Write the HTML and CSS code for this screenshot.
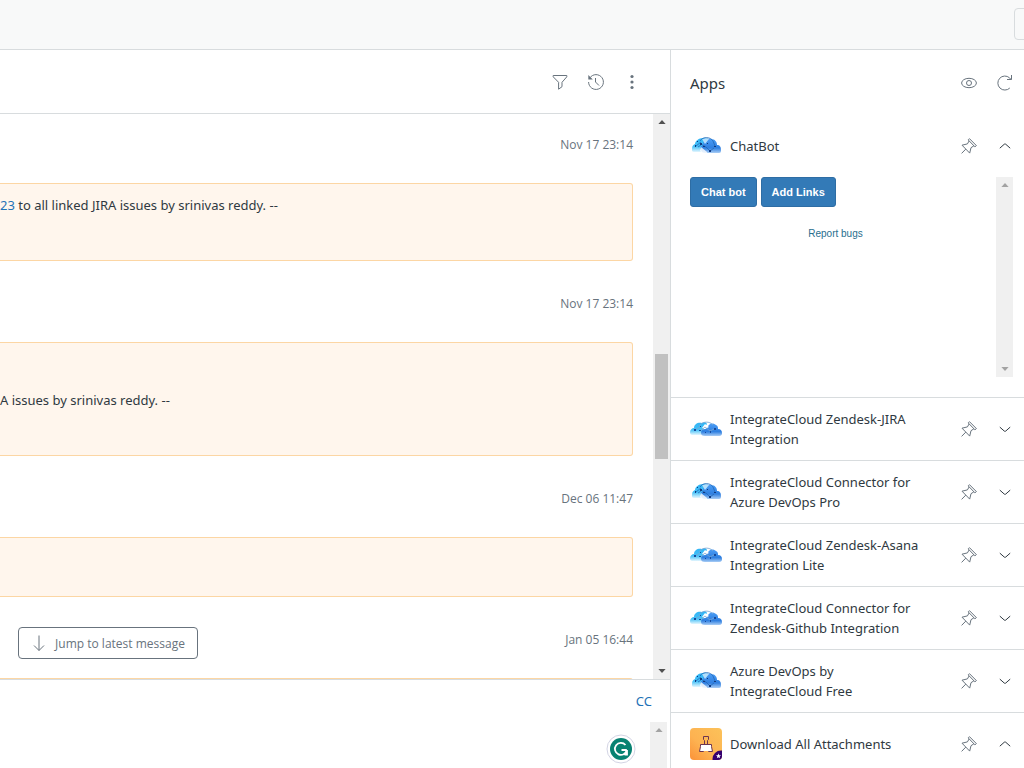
FILE: index.html
```html
<!DOCTYPE html>
<html lang="en">
<head>
	<meta charset="utf-8">
	<title>Ticket</title>
	<link rel="stylesheet" href="styles.css">
</head>
<body>
	<svg class="sprite" aria-hidden="true">
		<defs>
			<linearGradient id="cloudLight" x1="0" y1="0" x2="0" y2="1">
				<stop offset="0" stop-color="#2fb4f5"/>
				<stop offset=".6" stop-color="#45c0f7"/>
				<stop offset="1" stop-color="#e4f6fe"/>
			</linearGradient>
			<linearGradient id="cloudDark" x1="0" y1="0" x2="0" y2="1">
				<stop offset="0" stop-color="#4a9cf5"/>
				<stop offset=".65" stop-color="#2f7fe0"/>
				<stop offset="1" stop-color="#a9cdf5"/>
			</linearGradient>
			<linearGradient id="clipBg" x1="1" y1="0" x2="0" y2="1">
				<stop offset="0" stop-color="#fcc25a"/>
				<stop offset=".6" stop-color="#fdb251"/>
				<stop offset="1" stop-color="#fb9238"/>
			</linearGradient>
		</defs>
		<symbol id="cloud" viewBox="0 0 32 32">
			<path fill="url(#cloudLight)" d="M0 19c0-2 2-4 4-4 0-4 4-6 8-5 2-1 4-1 5 1l-3 4-3 7H2c-1 0-2-1-2-3z"/>
			<path fill="url(#cloudDark)" d="M11 20c0-3 2-4 4-4l5-5c2-1 5 0 6 1 2 1 2 2 2 4 3 0 4 2 4 4 0 3-2 3-4 3H15c-3 0-4-1-4-3z"/>
			<path fill="#fff" d="M12 15l3-4 4 3-4 2z"/>
			<path fill="none" stroke="#7ba6d0" stroke-width=".8" d="M9 13c3-5 11-5 14-1M5 17l5-3M10 18l5-4 5 4 4-2"/>
			<path fill="#164a9c" d="M4 16h2v2H4zM9 17h2v1H9zM10 13h1v1h-1zM20 18h1v2h-1zM24 15h2v2h-2zM15 19h1v1h-1z"/>
		</symbol>
		<symbol id="cloudPro" viewBox="0 0 32 32">
			<path fill="url(#cloudLight)" d="M2 19c0-3 1-4 3-5 0-3 4-6 8-6 4-1 6 1 7 4l-3 6-3 4H4c-2 0-2-1-2-3z"/>
			<path fill="url(#cloudDark)" d="M11 19c-1-2 0-3 2-4 0-4 2-7 8-6 4 0 6 3 6 6 3 0 4 2 4 5 0 3-1 3-3 3H15c-2 0-4-1-4-4z"/>
			<path fill="#fff" d="M11 17l6 5 1 3-5-1-3-3z" opacity=".8"/>
			<path fill="#b5dffb" d="M12 9l4-1 3 1-4 5z"/>
			<path fill="none" stroke="#2268b8" stroke-width=".8" d="M10 11c3-5 11-4 13 0l2 5M6 16l5-4M11 14l5 3 4 4 4-3M8 17l3-2"/>
			<path fill="#103a80" d="M5 15h1v2H5zM10 13h2v2h-2zM13 16h2v1h-2zM19 20h2v2h-2zM24 16h2v1h-2zM7 11h1v1H7zM17 13h1v1h-1z"/>
		</symbol>
		<symbol id="pin" viewBox="0 0 16 16">
			<path d="M7.2 1.9 8.5.7l6.9 6.900-1.500 1.200z"/>
			<path d="M8.100 3 6.400 5.900 1 7.200l7.700 7.900 1.300-5.400 2.900-1.900M4.800 11.100.600 15.400"/>
		</symbol>
		<symbol id="up" viewBox="0 0 16 16"><path d="M2.800 10.200 7.300 6.200q.7-.5 1.400 0l4.500 4"/></symbol>
		<symbol id="down" viewBox="0 0 16 16"><path d="M2.800 6.100l4.500 4q.7.5 1.400 0l4.500-4"/></symbol>
	</svg>

	<header class="topbar">
		<button class="topbarBtn" type="button" aria-label="Menu"></button>
	</header>

	<div class="main">
		<main class="ticket">
			<div class="toolbar">
				<button class="iconBtn" type="button" aria-label="Filter">
					<svg class="icon" viewBox="0 0 16 16"><path d="M1.200 1.500h13.600v1.300L10 8.300v4.400l-3.400 2.500V8.300L1.200 2.800z"/></svg>
				</button>
				<button class="iconBtn" type="button" aria-label="Events">
					<svg class="icon" viewBox="0 0 16 16"><path d="M2 3.700A7.400 7.400 0 1 1 .6 8M7.500 4v4l3.500 3.500"/><path class="solid" d="M.3 1v4.500h4.500z"/></svg>
				</button>
				<button class="iconBtn" type="button" aria-label="More">
					<svg class="icon" viewBox="0 0 16 16"><g class="solid"><circle cx="8" cy="2.500" r="1.600"/><circle cx="8" cy="8" r="1.600"/><circle cx="8" cy="13.500" r="1.600"/></g></svg>
				</button>
			</div>

			<div class="log">
				<div class="events">
					<time class="when">Nov 17 23:14</time>
					<div class="note"><a href="#">23</a> to all linked JIRA issues by srinivas reddy. --<br><br><br></div>
					<time class="when">Nov 17 23:14</time>
					<div class="note"><br><br>A issues by srinivas reddy. --<br><br><br></div>
					<time class="when">Dec 06 11:47</time>
					<div class="note"><br><br></div>
					<time class="when">Jan 05 16:44</time>
					<div class="note"><br><br></div>
				</div>
				<div class="bar">
					<svg class="arrow" viewBox="0 0 9 5"><path d="M0 5 4.500 0 9 5z"/></svg>
					<div class="thumb"></div>
					<svg class="arrow" viewBox="0 0 9 5"><path d="M0 0h9L4.500 5z"/></svg>
				</div>
				<button class="jump" type="button">
					<svg class="icon" viewBox="0 0 16 16"><path d="M8 .5v15M3 10.500l5 5 5-5"/></svg>
					Jump to latest message
				</button>
			</div>

			<div class="composer">
				<div class="ccRow"><a href="#">CC</a></div>
				<div class="editor">
					<textarea class="reply" aria-label="Reply"></textarea>
					<div class="bar barOff">
						<svg class="arrow" viewBox="0 0 9 5"><path d="M0 5 4.500 0 9 5z"/></svg>
					</div>
					<svg class="checker" viewBox="0 0 30 30">
						<circle cx="15" cy="15" r="14" fill="#fff" stroke="#d3d4e4"/>
						<circle cx="15" cy="15" r="11" fill="#078272"/>
						<path fill="none" stroke="#fff" stroke-width="1.800" d="M19.500 11A6 6 0 1 0 20.800 16M15.500 16h5.300M18.500 20.500h2.500V16"/>
					</svg>
				</div>
			</div>
		</main>

		<aside class="apps">
			<div class="appsHead">
				<h2>Apps</h2>
				<button class="iconBtn" type="button" aria-label="Show">
					<svg class="icon" viewBox="0 0 16 16"><ellipse cx="8" cy="8" rx="7.400" ry="4.700"/><circle cx="8" cy="8" r="2.500"/></svg>
				</button>
				<button class="iconBtn" type="button" aria-label="Reload">
					<svg class="icon" viewBox="0 0 16 16"><path d="M12.800 13A7 7 0 1 1 12.500 2.800L14 4.500M14.500 0v4.500H10"/></svg>
				</button>
			</div>

			<section class="app">
				<div class="appRow">
					<svg class="logo"><use href="#cloudPro"/></svg>
					<h3>ChatBot</h3>
					<button class="iconBtn" type="button" aria-label="Pin"><svg class="icon"><use href="#pin"/></svg></button>
					<button class="iconBtn dark" type="button" aria-label="Collapse"><svg class="icon"><use href="#up"/></svg></button>
				</div>
				<div class="frame">
					<div class="frameBody">
						<div class="frameBtns">
							<button class="btnBlue" type="button">Chat bot</button>
							<button class="btnBlue" type="button">Add Links</button>
						</div>
						<a class="bugs" href="#">Report bugs</a>
					</div>
					<div class="bar barOff">
						<svg class="arrow" viewBox="0 0 9 5"><path d="M0 5 4.500 0 9 5z"/></svg>
						<svg class="arrow" viewBox="0 0 9 5"><path d="M0 0h9L4.500 5z"/></svg>
					</div>
				</div>
			</section>

			<section class="app">
				<div class="appRow">
					<svg class="logo"><use href="#cloud"/></svg>
					<h3>IntegrateCloud Zendesk-JIRA Integration</h3>
					<button class="iconBtn" type="button" aria-label="Pin"><svg class="icon"><use href="#pin"/></svg></button>
					<button class="iconBtn dark" type="button" aria-label="Expand"><svg class="icon"><use href="#down"/></svg></button>
				</div>
			</section>
			<section class="app">
				<div class="appRow">
					<svg class="logo"><use href="#cloudPro"/></svg>
					<h3>IntegrateCloud Connector for Azure DevOps Pro</h3>
					<button class="iconBtn" type="button" aria-label="Pin"><svg class="icon"><use href="#pin"/></svg></button>
					<button class="iconBtn dark" type="button" aria-label="Expand"><svg class="icon"><use href="#down"/></svg></button>
				</div>
			</section>
			<section class="app">
				<div class="appRow">
					<svg class="logo"><use href="#cloud"/></svg>
					<h3>IntegrateCloud Zendesk-Asana Integration Lite</h3>
					<button class="iconBtn" type="button" aria-label="Pin"><svg class="icon"><use href="#pin"/></svg></button>
					<button class="iconBtn dark" type="button" aria-label="Expand"><svg class="icon"><use href="#down"/></svg></button>
				</div>
			</section>
			<section class="app">
				<div class="appRow">
					<svg class="logo"><use href="#cloud"/></svg>
					<h3>IntegrateCloud Connector for Zendesk-Github Integration</h3>
					<button class="iconBtn" type="button" aria-label="Pin"><svg class="icon"><use href="#pin"/></svg></button>
					<button class="iconBtn dark" type="button" aria-label="Expand"><svg class="icon"><use href="#down"/></svg></button>
				</div>
			</section>
			<section class="app">
				<div class="appRow">
					<svg class="logo"><use href="#cloudPro"/></svg>
					<h3>Azure DevOps by IntegrateCloud Free</h3>
					<button class="iconBtn" type="button" aria-label="Pin"><svg class="icon"><use href="#pin"/></svg></button>
					<button class="iconBtn dark" type="button" aria-label="Expand"><svg class="icon"><use href="#down"/></svg></button>
				</div>
			</section>
			<section class="app">
				<div class="appRow">
					<svg class="logo clip" viewBox="0 0 32 32">
						<path fill="url(#clipBg)" d="M0 0h32v32H0z"/>
						<path fill="none" stroke="#6d3550" d="M14.500 16v-3.500l-1-1V8.500h5v3l-1 1V16"/>
						<path fill="#fff" stroke="#6d3550" d="M10.500 16.500h11v2l1 5h-4l-1-3h-3l-1 3h-4l1-5z"/>
						<path fill="#fff" d="M13.500 18h5l1 5h-7z"/>
						<circle cx="31" cy="31" r="8.500" fill="#35006f"/>
						<path fill="#fff" d="M28.500 25.500l.7 1.700 1.800.1-1.400 1.200.5 1.800-1.600-1-1.600 1 .5-1.800-1.400-1.200 1.800-.1z"/>
					</svg>
					<h3>Download All Attachments</h3>
					<button class="iconBtn" type="button" aria-label="Pin"><svg class="icon"><use href="#pin"/></svg></button>
					<button class="iconBtn dark" type="button" aria-label="Collapse"><svg class="icon"><use href="#up"/></svg></button>
				</div>
			</section>
		</aside>
	</div>
</body>
</html>
```
FILE: styles.css
```css
* {
	box-sizing: border-box;
}
body {
	margin: 0;
	height: 100vh;
	display: flex;
	flex-direction: column;
	overflow: hidden;
	font: 13px/18px "Noto Sans", "Open Sans", sans-serif;
	color: #2f3941;
	background-color: white;
}
a {
	color: #1f73b7;
	text-decoration: none;
}
button {
	font-family: inherit;
	cursor: pointer;
}
.sprite {
	position: absolute;
	width: 0;
	height: 0;
}
.topbar {
	flex: none;
	display: flex;
	justify-content: flex-end;
	padding: 8px 0 9px;
	border-bottom: 1px solid #d8dcde;
	background-color: #f8f9f9;
	overflow: hidden;
}
.topbarBtn {
	width: 40px;
	height: 32px;
	margin-right: -30px;
	border: 1px solid #d8dcde;
	border-radius: 4px;
	background-color: #f8f9f9;
}
.main {
	flex: 1;
	min-height: 0;
	display: flex;
}
.ticket {
	flex: 1;
	min-width: 0;
	display: flex;
	flex-direction: column;
}
.toolbar {
	flex: none;
	display: flex;
	justify-content: flex-end;
	gap: 20px;
	padding: 24px 30px 23px 0;
	border-bottom: 1px solid #d8dcde;
}
.iconBtn {
	flex: none;
	display: block;
	padding: 0;
	border: 0 none;
	background: none;
	color: #68737d;
}
.iconBtn.dark {
	color: #2f3941;
}
.icon {
	display: block;
	width: 16px;
	height: 16px;
	fill: none;
	stroke: currentColor;
}
.solid {
	fill: currentColor;
	stroke: none;
}

/* conversation */
.log {
	flex: 1;
	min-height: 0;
	display: flex;
	position: relative;
}
.events {
	flex: 1;
	padding: 21px 20px 0 0;
	overflow: hidden;
}
.when {
	display: block;
	margin-bottom: 28px;
	line-height: 20px;
	font-family: "Open Sans", "Noto Sans", sans-serif;
	font-size: 12px;
	text-align: right;
	color: #68737d;
}
.note {
	margin-bottom: 32px;
	padding: 12px 12px 10px 0;
	border: 1px solid #fcd6a4;
	border-left: 0 none;
	border-radius: 0 3px 3px 0;
	background-color: #fff6ed;
}
.note + .when {
	padding-top: 1px;
}
.bar {
	flex: none;
	width: 17px;
	padding: 6px 0;
	display: flex;
	flex-direction: column;
	align-items: center;
	justify-content: space-between;
	background-color: #f0f0f0;
}
.arrow {
	width: 8px;
	height: 4px;
	fill: #505050;
}
.barOff .arrow {
	fill: #a3a3a3;
}
.thumb {
	width: 13px;
	height: 105px;
	margin-top: 20px;
	background-color: #c1c1c1;
}
.jump {
	position: absolute;
	left: 18px;
	bottom: 20px;
	width: 180px;
	height: 32px;
	display: flex;
	align-items: center;
	justify-content: center;
	gap: 8px;
	padding: 0;
	border: 1px solid #68737d;
	border-radius: 4px;
	font-family: "Open Sans", "Noto Sans", sans-serif;
	font-size: 12px;
	color: #68737d;
	background-color: white;
}
.composer {
	flex: none;
	border-top: 1px solid #d8dcde;
}
.ccRow {
	padding: 12px 18px 12px 0;
	text-align: right;
}
.editor {
	height: 46px;
	display: flex;
	padding-right: 3px;
	position: relative;
}
.reply {
	flex: 1;
	padding: 8px;
	border: 0 none;
	outline: none;
	resize: none;
	font: inherit;
}
.checker {
	position: absolute;
	right: 34px;
	top: 12px;
	width: 30px;
	height: 30px;
}

/* apps panel */
.apps {
	flex: 0 0 354px;
	border-left: 1px solid #d8dcde;
	overflow: hidden;
}
.appsHead, .appRow {
	display: flex;
	align-items: center;
	gap: 20px;
	padding: 11px 11px 11px 19px;
}
.appsHead {
	padding-top: 23px;
	padding-bottom: 22px;
}
.appsHead h2 {
	flex: 1;
	margin: 0;
	font-size: 15px;
	font-weight: normal;
	line-height: 20px;
}
.app + .app {
	border-top: 1px solid #d8dcde;
}
.appRow {
	min-height: 62px;
}
.appRow h3 {
	flex: 1;
	margin: 0 18px 0 -12px;
	font-size: 13px;
	font-weight: normal;
	line-height: 20px;
}
.logo {
	flex: none;
	width: 32px;
	height: 32px;
}
.clip {
	border-radius: 4px;
}
.frame {
	height: 200px;
	margin: 0 11px 20px 19px;
	display: flex;
}
.frameBody {
	flex: 1;
	padding-right: 15px;
}
.frameBtns {
	display: flex;
	gap: 4px;
}
.btnBlue {
	height: 30px;
	padding: 0 10px;
	border: 1px solid #2e6da4;
	border-radius: 3px;
	font: bold 11px "Liberation Sans", Arial, sans-serif;
	color: white;
	background-color: #337ab7;
}
.bugs {
	display: block;
	margin-top: 18px;
	font-family: "Liberation Sans", Arial, sans-serif;
	font-size: 10px;
	text-align: center;
	color: #286e8e;
}
```
